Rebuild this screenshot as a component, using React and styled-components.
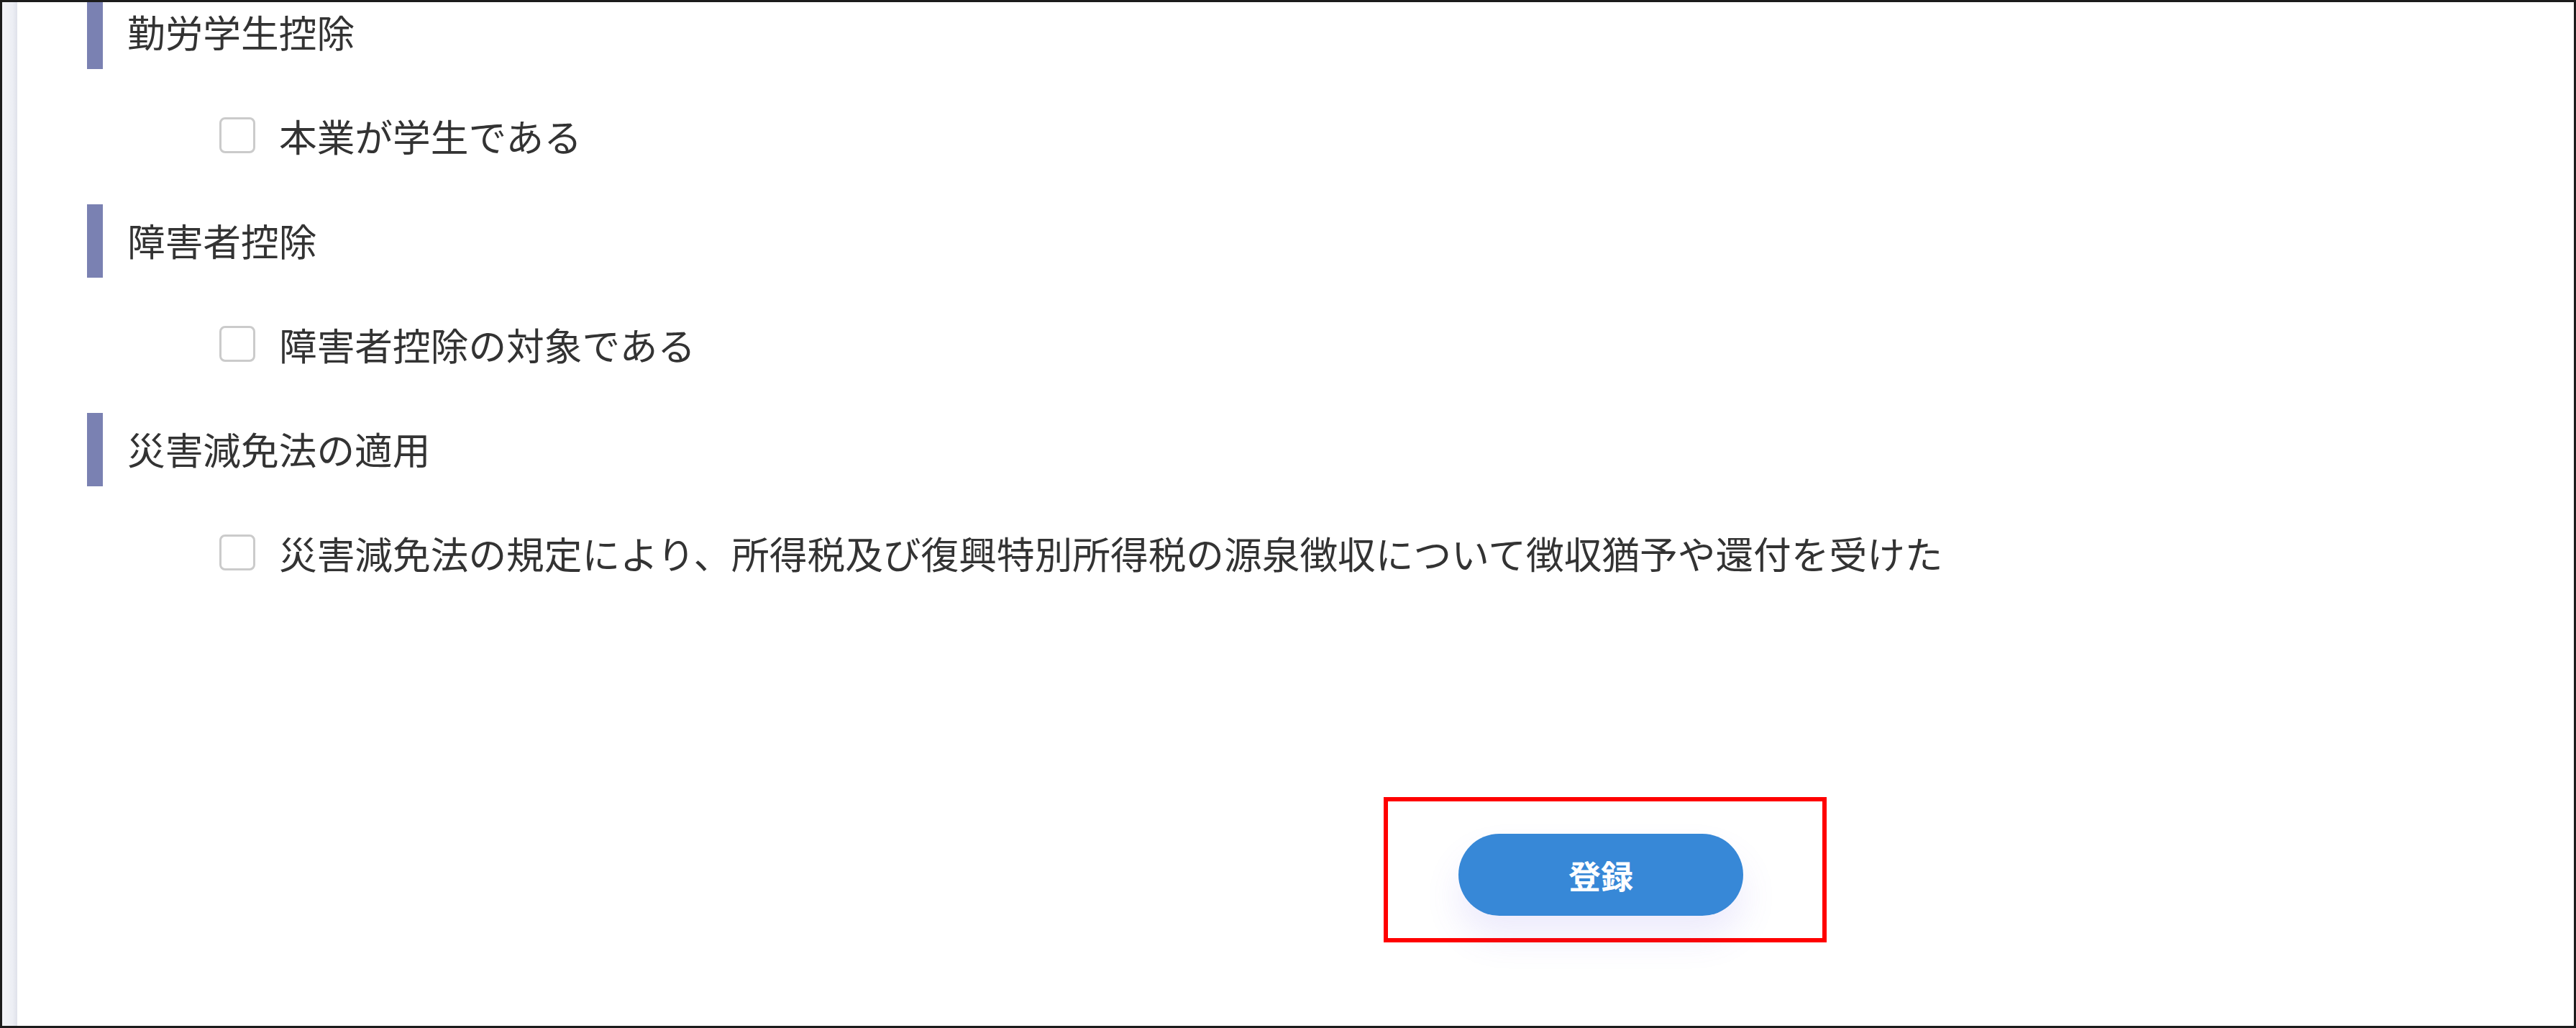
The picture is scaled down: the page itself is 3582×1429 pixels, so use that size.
import React from "react";
import styled, { createGlobalStyle } from "styled-components";

const GlobalStyle = createGlobalStyle`
  html, body {
    margin: 0;
    padding: 0;
    background: #ffffff;
  }
  body {
    font-family: "Noto Sans CJK JP", "Noto Sans", sans-serif;
    color: #333333;
  }
`;

// outer window frame
const Frame = styled.div`
  width: 3582px;
  height: 1429px;
  box-sizing: border-box;
  border: 3px solid #1c1c1c;
  background: #ffffff;
  display: flex;
  overflow: hidden;
`;

// thin strip left over from the side menu
const SideEdge = styled.div`
  width: 21px;
  flex-shrink: 0;
  background: linear-gradient(to right, #f3f4f8 0%, #eceef4 70%, #dfe1ea 100%);
`;

const Main = styled.main`
  flex: 1;
  display: flex;
  flex-direction: column;
  padding-left: 97px;
  margin-top: -9px;
`;

const Section = styled.section`
  display: flex;
  flex-direction: column;
`;

const Heading = styled.h3`
  margin: 0;
  height: 102px;
  box-sizing: border-box;
  display: flex;
  align-items: center;
  border-left: 22px solid #7a81b2;
  padding-left: 34px;
  padding-bottom: 3px;
  font-size: 52.7px;
  font-weight: 400;
  color: #333333;
  line-height: 1;
`;

const OptionRow = styled.label`
  margin: 62px 0 66px;
  height: 60px;
  display: flex;
  align-items: center;
  gap: 33px;
  padding-left: 184px;
  font-size: 52.7px;
  color: #333333;
  line-height: 1;
  cursor: pointer;
`;

const Checkbox = styled.input.attrs({ type: "checkbox" })`
  appearance: none;
  margin: 0;
  width: 50px;
  height: 50px;
  box-sizing: border-box;
  border: 3px solid #cbcbcb;
  border-radius: 8px;
  background: #ffffff;
  flex-shrink: 0;
`;

const Footer = styled.div`
  margin-top: 244px;
  padding-left: 1803px;
  display: flex;
`;

// red annotation frame round the button
const Highlight = styled.div`
  width: 616px;
  height: 202px;
  box-sizing: border-box;
  border: 6px solid #ff0000;
  display: flex;
  align-items: center;
  justify-content: center;
  padding: 14px 12px 0 0;
`;

const SubmitButton = styled.button`
  width: 396px;
  height: 114px;
  border: none;
  border-radius: 57px;
  background: #3788d7;
  color: #ffffff;
  font-family: "Noto Sans CJK JP", "Noto Sans", sans-serif;
  font-size: 45px;
  font-weight: 700;
  box-shadow: 0 30px 50px rgba(110, 90, 230, 0.12);
  cursor: pointer;
`;

const sections = [
  { title: "勤労学生控除", option: "本業が学生である" },
  { title: "障害者控除", option: "障害者控除の対象である" },
  {
    title: "災害減免法の適用",
    option:
      "災害減免法の規定により、所得税及び復興特別所得税の源泉徴収について徴収猶予や還付を受けた",
  },
];

export default function App() {
  return (
    <>
      <GlobalStyle />
      <Frame>
        <SideEdge />
        <Main>
          {sections.map((s) => (
            <Section key={s.title}>
              <Heading>{s.title}</Heading>
              <OptionRow>
                <Checkbox />
                <span>{s.option}</span>
              </OptionRow>
            </Section>
          ))}
          <Footer>
            <Highlight>
              <SubmitButton>登録</SubmitButton>
            </Highlight>
          </Footer>
        </Main>
      </Frame>
    </>
  );
}
